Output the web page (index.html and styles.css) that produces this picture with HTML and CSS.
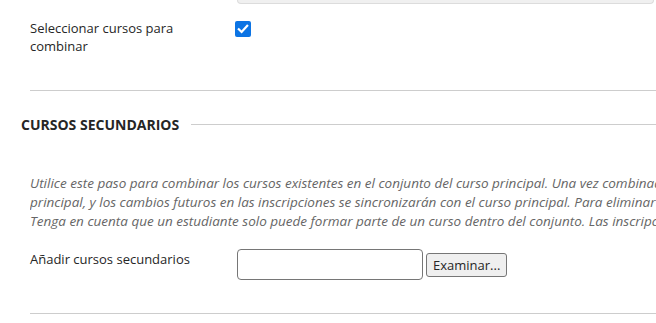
FILE: index.html
```html
<!DOCTYPE html>
<html lang="es">
<head>
<meta charset="utf-8">
<link rel="stylesheet" href="styles.css">
</head>
<body>
<div class="page">
  <div class="top-box"></div>
  <div class="field-row first">
    <div class="label">Seleccionar cursos para combinar</div>
    <div class="control">
      <span class="checkbox" role="checkbox" aria-checked="true">
        <svg width="16" height="16" viewBox="0 0 16 16"><path d="M3.8 8.3 L6.6 11 L12.2 4.8" fill="none" stroke="#fff" stroke-width="2.2" stroke-linecap="square"/></svg>
      </span>
    </div>
  </div>
  <div class="divider"></div>
  <div class="section-head">
    <h2>CURSOS SECUNDARIOS</h2>
    <div class="head-line"></div>
  </div>
  <p class="help">Utilice este paso para combinar los cursos existentes en el conjunto del curso principal. Una vez combinados, los cursos secundarios<br>principal, y los cambios futuros en las inscripciones se sincronizarán con el curso principal. Para eliminar cursos del conjunto<br>Tenga en cuenta que un estudiante solo puede formar parte de un curso dentro del conjunto. Las inscripciones duplicadas</p>
  <div class="field-row second">
    <div class="label">Añadir cursos secundarios</div>
    <div class="control inline">
      <input class="text-input" type="text">
      <button class="browse" type="button">Examinar...</button>
    </div>
  </div>
  <div class="divider"></div>
</div>
</body>
</html>
```
FILE: styles.css
```css
html, body {
  margin: 0;
  padding: 0;
  background: #fff;
}
body {
  font-family: "Open Sans", "Liberation Sans", sans-serif;
  color: #262626;
  width: 656px;
  height: 323px;
  overflow: hidden;
}
.page {
  display: flex;
  flex-direction: column;
}
.top-box {
  margin-left: 237px;
  margin-right: 2px;
  height: 3px;
  background: #f0f0f0;
  border: 1px solid #dcdcdc;
  border-top: none;
  border-radius: 0 0 6px 6px;
}
.field-row {
  display: flex;
  padding-left: 30px;
}
.field-row.first {
  margin-top: 15px;
  height: 71px;
}
.label {
  width: 205px;
  font-size: 13px;
  line-height: 18px;
  color: #262626;
}
.field-row.first .label {
  width: 170px;
}
.field-row.first .control {
  margin-left: 35px;
  margin-top: 2px;
}
.checkbox {
  display: block;
  width: 16px;
  height: 16px;
  background: #0c74e4;
  border-radius: 2px;
}
.checkbox svg {
  display: block;
}
.divider {
  margin-left: 30px;
  height: 1px;
  background: #cdcdcd;
}
.section-head {
  display: flex;
  align-items: center;
  padding-left: 21px;
  margin-top: 24px;
  gap: 12px;
}
.section-head h2 {
  margin: 0;
  font-size: 14px;
  font-weight: 700;
  line-height: 19px;
  color: #262626;
  white-space: nowrap;
}
.head-line {
  flex: 1;
  height: 1px;
  background: #cdcdcd;
}
.help {
  margin: 40px 0 0 30px;
  font-size: 13.5px;
  line-height: 19px;
  font-style: italic;
  color: #666;
  white-space: nowrap;
  overflow: hidden;
}
.field-row.second {
  margin-top: 18px;
  height: 64px;
}
.field-row.second .label {
  margin-top: 1px;
}
.control.inline {
  display: flex;
  align-items: center;
  align-self: flex-start;
  gap: 3px;
}
.text-input {
  box-sizing: border-box;
  width: 186px;
  height: 31px;
  margin: 0 0 0 2px;
  border: 1px solid #767676;
  border-radius: 4px;
  background: #fff;
  padding: 0 4px;
  font: 13px "Open Sans", sans-serif;
}
.browse {
  box-sizing: border-box;
  height: 24px;
  padding: 0 6px;
  margin: 0;
  font: 13px "Open Sans", "Liberation Sans", sans-serif;
  color: #262626;
  background: #efefef;
  border: 1px solid #767676;
  border-radius: 3px;
}
```
